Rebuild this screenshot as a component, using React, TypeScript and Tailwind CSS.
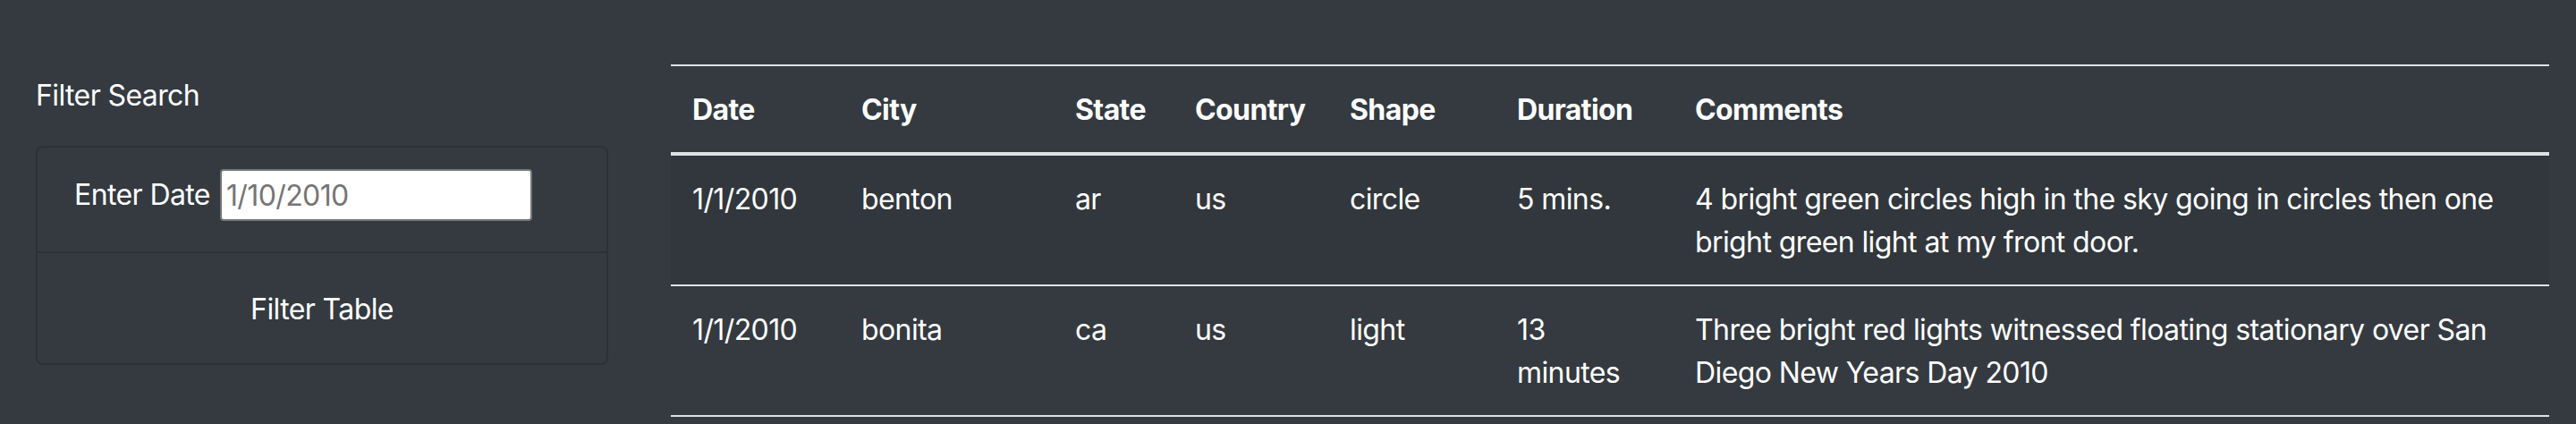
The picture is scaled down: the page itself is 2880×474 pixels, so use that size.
import * as React from "react";

type Sighting = {
  datetime: string;
  city: string;
  state: string;
  country: string;
  shape: string;
  duration: string;
  comments: string;
};

const SIGHTINGS: Sighting[] = [
  {
    datetime: "1/1/2010",
    city: "benton",
    state: "ar",
    country: "us",
    shape: "circle",
    duration: "5 mins.",
    comments:
      "4 bright green circles high in the sky going in circles then one bright green light at my front door.",
  },
  {
    datetime: "1/1/2010",
    city: "bonita",
    state: "ca",
    country: "us",
    shape: "light",
    duration: "13 minutes",
    comments: "Three bright red lights witnessed floating stationary over San Diego New Years Day 2010",
  },
];

// Widths taken from the rendered table, so wrapping stays put.
const COLUMNS = [
  { label: "Date", className: "w-[189px]" },
  { label: "City", className: "w-[239px]" },
  { label: "State", className: "w-[134px]" },
  { label: "Country", className: "w-[173px]" },
  { label: "Shape", className: "w-[187px]" },
  { label: "Duration", className: "w-[199px]" },
  { label: "Comments", className: "w-[979px]" },
];

function FilterPanel() {
  const [date, setDate] = React.useState("");

  return (
    <aside className="ml-[40px] w-[640px] shrink-0 pt-[83px]">
      <h5 className="h-[48px] text-[32px] leading-[48px] font-normal">Filter Search</h5>
      <form
        className="mt-[32px] rounded-[8px] border-2 border-black/15"
        onSubmit={(e) => e.preventDefault()}
      >
        <div className="h-[118px] border-b-2 border-black/15 pl-[41px] pt-[24px]">
          <div className="flex h-[58px] items-center">
            <label htmlFor="datetime" className="mr-[11px] text-[32px] leading-[48px]">
              Enter Date
            </label>
            <input
              id="datetime"
              type="text"
              value={date}
              onChange={(e) => setDate(e.target.value)}
              placeholder="1/10/2010"
              className="h-[58px] w-[349px] rounded-[4px] border-2 border-[#767676] bg-white px-[5px] text-[32px] text-black placeholder:text-[#757575] outline-none"
            />
          </div>
        </div>
        <button
          type="submit"
          className="flex h-[123px] w-full items-center justify-center pt-[2px] text-[32px] leading-[48px] text-white"
        >
          Filter Table
        </button>
      </form>
    </aside>
  );
}

function SightingsTable() {
  return (
    <div className="ml-[70px] mt-[72px] w-[2100px] shrink-0">
      <table className="w-full table-fixed border-collapse text-left text-[32px] leading-[48px]">
        <thead>
          <tr className="border-t-2 border-b-4 border-[#dee2e6]">
            {COLUMNS.map((c) => (
              <th key={c.label} className={`${c.className} p-[24px] pt-[25px] pb-[23px] align-bottom font-bold`}>
                {c.label}
              </th>
            ))}
          </tr>
        </thead>
        <tbody>
          {SIGHTINGS.map((s, i) => (
            <tr
              key={s.city + i}
              className={`border-b-2 border-[#dee2e6] ${i % 2 === 0 ? "bg-black/5" : ""}`}
            >
              <td className="p-[24px] pt-[25px] pb-[23px] align-top">{s.datetime}</td>
              <td className="p-[24px] pt-[25px] pb-[23px] align-top">{s.city}</td>
              <td className="p-[24px] pt-[25px] pb-[23px] align-top">{s.state}</td>
              <td className="p-[24px] pt-[25px] pb-[23px] align-top">{s.country}</td>
              <td className="p-[24px] pt-[25px] pb-[23px] align-top">{s.shape}</td>
              <td className="p-[24px] pt-[25px] pb-[23px] align-top">{s.duration}</td>
              <td className="p-[24px] pt-[25px] pb-[23px] align-top">{s.comments}</td>
            </tr>
          ))}
        </tbody>
      </table>
    </div>
  );
}

export default function App() {
  return (
    <div className="flex h-[474px] w-[2880px] items-start overflow-hidden bg-[#343a40] font-['Inter',sans-serif] tracking-[-0.6px] text-white">
      <FilterPanel />
      <SightingsTable />
    </div>
  );
}
